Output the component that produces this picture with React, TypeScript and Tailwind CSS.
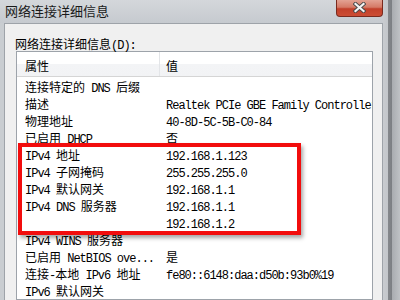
import React from 'react';

const ROWS: [string, string][] = [
  ['连接特定的 DNS 后缀', ''],
  ['描述', 'Realtek PCIe GBE Family Controller'],
  ['物理地址', '40-8D-5C-5B-C0-84'],
  ['已启用 DHCP', '否'],
  ['IPv4 地址', '192.168.1.123'],
  ['IPv4 子网掩码', '255.255.255.0'],
  ['IPv4 默认网关', '192.168.1.1'],
  ['IPv4 DNS 服务器', '192.168.1.1'],
  ['', '192.168.1.2'],
  ['IPv4 WINS 服务器', ''],
  ['已启用 NetBIOS ove...', '是'],
  ['连接-本地 IPv6 地址', 'fe80::6148:daa:d50b:93b0%19'],
  ['IPv6 默认网关', ''],
];

// SimSun-like mix: half-width latin runs, full-width CJK runs
function Txt({ s }: { s: string }) {
  const parts = s.match(/[\x20-\x7e]+|[^\x20-\x7e]+/g) || [];
  return (
    <>
      {parts.map((p, i) =>
        /^[\x20-\x7e]/.test(p) ? (
          <span key={i} className="font-['Liberation_Mono',monospace] text-[12px] tracking-[-1px] whitespace-pre">
            {p}
          </span>
        ) : (
          <span key={i} className="font-['Noto_Sans_CJK_SC',sans-serif] text-[12px]">
            {p}
          </span>
        )
      )}
    </>
  );
}

function CloseButton() {
  return (
    <div className="w-[47px] h-[17px] flex items-center justify-center rounded-b-[4px] border border-t-0 border-[#7a2a1e] bg-[linear-gradient(to_bottom,#e3a293_0%,#d57a66_45%,#c2402a_55%,#cc4d34_100%)]">
      <svg width="13" height="11" viewBox="0 0 13 11" className="-mt-[2px]">
        <path d="M2.5 2 L10.5 9 M10.5 2 L2.5 9" stroke="#4a4a4a" strokeWidth="4" strokeLinecap="square" />
        <path d="M2.5 2 L10.5 9 M10.5 2 L2.5 9" stroke="#f4f4f4" strokeWidth="2.2" strokeLinecap="square" />
      </svg>
    </div>
  );
}

export default function App() {
  return (
    <div className="w-[400px] h-[300px] overflow-hidden relative flex bg-[#cdd0d4] text-black">
      <div className="w-[383px] flex flex-col">
        {/* Title bar */}
        <div className="h-[27px] flex justify-between items-start bg-[linear-gradient(to_bottom,#d4d7db,#c6cacf)]">
          <div className="pl-[5px] pt-[3px] leading-[16px] text-[13px] text-[#1a1a1a] font-['Noto_Sans_CJK_SC',sans-serif]">
            网络连接详细信息
          </div>
          <CloseButton />
        </div>

        <div className="flex-1 flex">
          <div className="w-[4px] bg-[#c9cdd1]" />
          <div className="flex-1 bg-[#f0f0f0] border-l border-t border-r border-[#9ea3a9] pl-[11px] pt-[12px]">
            <div className="h-[13px] leading-[14px] -ml-[1px]">
              <Txt s="网络连接详细信息(D):" />
            </div>
            <div className="mt-[2px] w-[357px] bg-white border border-[#9da3aa]">
              {/* Header */}
              <div className="h-[25px] flex border-b border-[#d5d5d5] bg-[linear-gradient(to_bottom,#ffffff_0%,#ffffff_50%,#f3f4f6_52%,#f2f3f5_100%)] leading-[26px]">
                <div className="w-[143px] h-full pl-[8px] border-r border-[#e3e5e8]">
                  <Txt s="属性" />
                </div>
                <div className="pl-[6px]">
                  <Txt s="值" />
                </div>
              </div>
              {/* Rows */}
              <div className="pt-[1px]">
                {ROWS.map(([k, v], i) => (
                  <div key={i} className="h-[17px] flex leading-[17px]">
                    <div className="w-[143px] shrink-0 pl-[8px] whitespace-nowrap">
                      <Txt s={k} />
                    </div>
                    <div className="flex-1 min-w-0 pl-[6px] whitespace-nowrap overflow-hidden">
                      <Txt s={v} />
                    </div>
                  </div>
                ))}
              </div>
            </div>
          </div>
        </div>
      </div>

      {/* Right window frame */}
      <div className="w-[17px] bg-[linear-gradient(to_right,#c9ccd0_0px,#c3c6ca_5px,#85888c_5px,#7c7f83_9px,#a9acb0_9px,#bfc2c5_17px)]" />

      {/* Red highlight box */}
      <div className="absolute left-[18px] top-[143px] w-[283px] h-[92px] border-[4px] border-[#f20d0d] shadow-[2px_3px_4px_rgba(0,0,0,0.35)]" />
    </div>
  );
}
